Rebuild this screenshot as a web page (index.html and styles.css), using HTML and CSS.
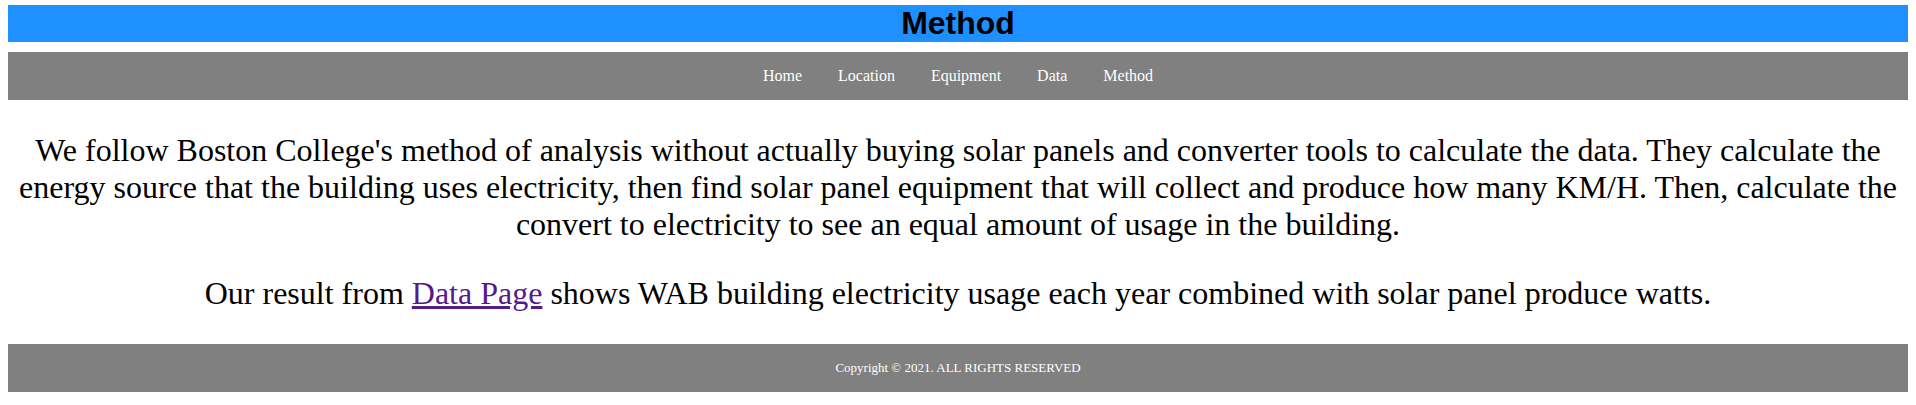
FILE: index.html
```html
<!DOCTYPE html>
<html lang="en">
<head>
<meta charset="utf-8">
<title>Method</title>
<link rel="stylesheet" href="styles.css">
</head>
<body>
<div class="page">
  <h1 class="title">Method</h1>
  <nav class="nav">
    <a href="#">Home</a>
    <a href="#">Location</a>
    <a href="#">Equipment</a>
    <a href="#">Data</a>
    <a href="#">Method</a>
  </nav>
  <main class="content">
    <p>We follow Boston College's method of analysis without actually buying solar panels and converter tools to calculate the data. They calculate the energy source that the building uses electricity, then find solar panel equipment that will collect and produce how many KM/H. Then, calculate the convert to electricity to see an equal amount of usage in the building.</p>
    <p>Our result from <a class="visited" href="#">Data Page</a> shows WAB building electricity usage each year combined with solar panel produce watts.</p>
  </main>
  <footer class="footer">Copyright © 2021. ALL RIGHTS RESERVED</footer>
</div>
</body>
</html>
```
FILE: styles.css
```css
html, body {
  margin: 0;
  padding: 0;
  background: #fff;
}
.page {
  padding: 5px 8px 8px;
  font-family: "Liberation Serif", "Times New Roman", serif;
}
.title {
  margin: 0;
  background: #1E90FF;
  color: #000;
  font-family: "Liberation Sans", Arial, sans-serif;
  font-size: 32px;
  font-weight: bold;
  line-height: 37px;
  text-align: center;
}
.nav {
  margin-top: 10px;
  height: 48px;
  background: #808080;
  display: flex;
  justify-content: center;
  align-items: center;
}
.nav a {
  color: #fff;
  text-decoration: none;
  font-size: 16px;
  padding: 0 18px;
}
.content p {
  margin: 32px 0;
  font-size: 32px;
  text-align: center;
  color: #000;
}
.content a.visited {
  color: #551A8B;
}
.footer {
  height: 48px;
  background: #808080;
  color: #fff;
  font-size: 13px;
  display: flex;
  justify-content: center;
  align-items: center;
}
```
